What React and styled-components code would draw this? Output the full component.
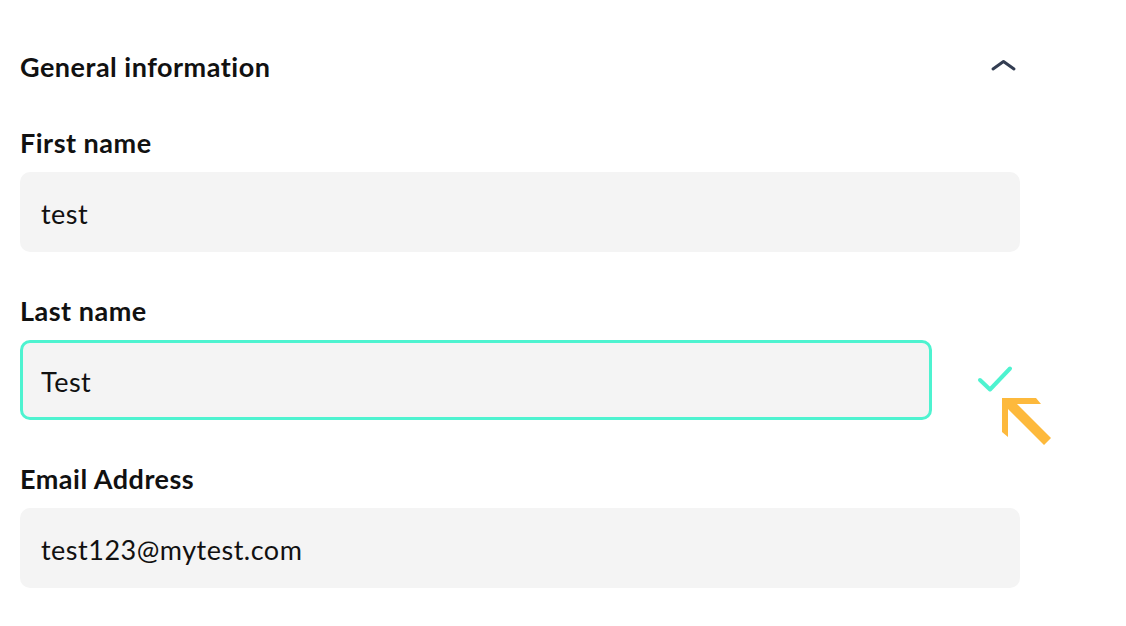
import React from 'react'
import styled, { createGlobalStyle } from 'styled-components'

const GlobalStyle = createGlobalStyle`
    body {
        margin: 0;
        background: #ffffff;
        font-family: Lato, 'Noto Sans', sans-serif;
        color: #111111;
    }
`

const Section = styled.section`
    width: 1000px;
    padding: 51px 0 0 20px;
    display: flex;
    flex-direction: column;
`

const Header = styled.div`
    display: flex;
    align-items: center;
    justify-content: space-between;
    height: 32px;
`

const Title = styled.h2`
    margin: 0;
    font-size: 27px;
    line-height: 32px;
    letter-spacing: 0.5px;
    font-weight: 700;
    color: #111111;
`

const Toggle = styled.button`
    border: 0;
    padding: 0;
    background: none;
    display: flex;
    cursor: pointer;
`

const Field = styled.div`
    display: flex;
    flex-direction: column;
    margin-top: ${({ first }) => (first ? '44px' : '43px')};
`

const Label = styled.label`
    font-size: 27px;
    line-height: 32px;
    letter-spacing: 0.5px;
    font-weight: 700;
    margin-bottom: 13px;
`

const Row = styled.div`
    position: relative;
    display: flex;
    align-items: center;
`

const Input = styled.input`
    box-sizing: border-box;
    width: ${({ narrow }) => (narrow ? '912px' : '100%')};
    height: 80px;
    padding: 2px 18px 0;
    border-radius: 10px;
    border: 3px solid ${({ valid }) => (valid ? '#4ef3d0' : 'transparent')};
    background: #f4f4f4;
    font-family: Lato, 'Noto Sans', sans-serif;
    font-size: 27px;
    letter-spacing: 0.5px;
    color: #111111;
    outline: none;
`

const Check = styled.svg`
    margin-left: 43px;
    flex-shrink: 0;
`

// pointer overlaid beside the validated field
const Pointer = styled.svg`
    position: absolute;
    left: 980px;
    top: 56px;
`

const ChevronUp = () => (
    <svg width="32" height="16" viewBox="0 0 32 16" fill="none">
        <polyline points="5,10 15.5,2.5 26,10" stroke="#333d52" strokeWidth="3" strokeLinecap="round" strokeLinejoin="round" />
    </svg>
)

const fields = [
    { id: 'first-name', label: 'First name', value: 'test' },
    { id: 'last-name', label: 'Last name', value: 'Test', valid: true },
    { id: 'email', label: 'Email Address', value: 'test123@mytest.com' },
]

export default function App() {
    return (
        <>
            <GlobalStyle />
            <Section>
                <Header>
                    <Title>General information</Title>
                    <Toggle aria-label="Collapse">
                        <ChevronUp />
                    </Toggle>
                </Header>
                {fields.map((f, i) => (
                    <Field key={f.id} first={i === 0}>
                        <Label htmlFor={f.id}>{f.label}</Label>
                        <Row>
                            <Input id={f.id} value={f.value} readOnly narrow={f.valid} valid={f.valid} />
                            {f.valid && (
                                <>
                                    <Check width="40" height="30" viewBox="0 0 40 30" fill="none">
                                        <polyline points="5,15 15,24.5 35,3.5" stroke="#4ef3d0" strokeWidth="4" strokeLinecap="round" strokeLinejoin="round" />
                                    </Check>
                                    <Pointer width="54" height="52" viewBox="0 0 54 52">
                                        <polygon points="2,2 36,2 41,8 17,8 51,42 44,49 8,13 8,41 2,36" fill="#fdb93c" />
                                    </Pointer>
                                </>
                            )}
                        </Row>
                    </Field>
                ))}
            </Section>
        </>
    )
}
